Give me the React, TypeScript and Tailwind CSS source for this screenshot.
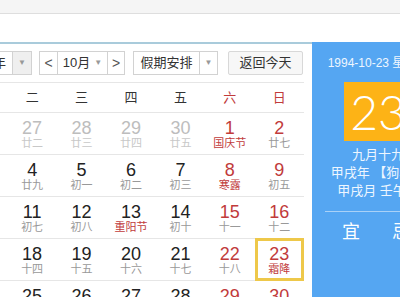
import React from 'react'

type Day = { n: number; lunar: string; other?: boolean; festival?: boolean; today?: boolean }

const rows: Day[][] = [
  [
    { n: 26, lunar: '廿一', other: true },
    { n: 27, lunar: '廿二', other: true },
    { n: 28, lunar: '廿三', other: true },
    { n: 29, lunar: '廿四', other: true },
    { n: 30, lunar: '廿五', other: true },
    { n: 1, lunar: '国庆节', festival: true },
    { n: 2, lunar: '廿七' },
  ],
  [
    { n: 3, lunar: '廿八' },
    { n: 4, lunar: '廿九' },
    { n: 5, lunar: '初一' },
    { n: 6, lunar: '初二' },
    { n: 7, lunar: '初三' },
    { n: 8, lunar: '寒露', festival: true },
    { n: 9, lunar: '初五' },
  ],
  [
    { n: 10, lunar: '初六' },
    { n: 11, lunar: '初七' },
    { n: 12, lunar: '初八' },
    { n: 13, lunar: '重阳节', festival: true },
    { n: 14, lunar: '初十' },
    { n: 15, lunar: '十一' },
    { n: 16, lunar: '十二' },
  ],
  [
    { n: 17, lunar: '十三' },
    { n: 18, lunar: '十四' },
    { n: 19, lunar: '十五' },
    { n: 20, lunar: '十六' },
    { n: 21, lunar: '十七' },
    { n: 22, lunar: '十八' },
    { n: 23, lunar: '霜降', festival: true, today: true },
  ],
  [
    { n: 24, lunar: '二十' },
    { n: 25, lunar: '廿一' },
    { n: 26, lunar: '廿二' },
    { n: 27, lunar: '廿三' },
    { n: 28, lunar: '廿四' },
    { n: 29, lunar: '廿五' },
    { n: 30, lunar: '廿六' },
  ],
]

const weekdays = ['一', '二', '三', '四', '五', '六', '日']

function Caret() {
  return <span className="text-[8px] text-[#999]">▼</span>
}

export default function App() {
  return (
    <div
      className="w-[400px] h-[297px] overflow-hidden bg-white"
      style={{ fontFamily: '"Liberation Sans", "Noto Sans CJK SC", sans-serif' }}
    >
      <div className="h-[14px] bg-[#f5f5f5] border-b border-[#dedede]" />
      <div className="h-[28px]" />

      <div className="flex">
        {/* calendar */}
        <div className="w-[312px] shrink-0 overflow-hidden border-t-2 border-[#a9cbdb]">
          <div className="ml-[-42px] w-[346px]">
            {/* toolbar */}
            <div className="h-[39px] flex items-center pl-[2px] border-b border-[#e6e6e6] text-[13px] text-[#333]">
              <div className="flex h-[24px] w-[72px] border border-[#d2d2d2] bg-white">
                <div className="flex-1 flex items-center justify-end pr-[6px]">1994年</div>
                <div className="w-[19px] flex items-center justify-center border-l border-[#d2d2d2] bg-[#efefef]">
                  <Caret />
                </div>
              </div>
              <div className="ml-[7px] flex h-[24px] w-[86px] border border-[#d2d2d2] bg-white">
                <div className="w-[18px] flex items-center justify-center border-r border-[#d2d2d2] text-[14px] text-[#555]">&lt;</div>
                <div className="flex-1 flex items-center justify-center gap-[4px]">
                  10月 <Caret />
                </div>
                <div className="w-[17px] flex items-center justify-center border-l border-[#d2d2d2] text-[14px] text-[#555]">&gt;</div>
              </div>
              <div className="ml-[8px] flex h-[24px] w-[85px] border border-[#d2d2d2] bg-white">
                <div className="flex-1 flex items-center justify-center">假期安排</div>
                <div className="w-[18px] flex items-center justify-center border-l border-[#d2d2d2]">
                  <Caret />
                </div>
              </div>
              <div className="ml-[10px] h-[24px] w-[75px] flex items-center justify-center border border-[#d8d8d8] rounded-[2px] bg-[#f7f7f7]">
                返回今天
              </div>
            </div>

            {/* weekday header */}
            <div className="grid grid-cols-7 h-[30px] border-b border-[#e6e6e6] text-[13px]">
              {weekdays.map((w, i) => (
                <div key={w} className={`flex items-center justify-center ${i >= 5 ? 'text-[#c13b3b]' : 'text-[#333]'}`}>
                  {w}
                </div>
              ))}
            </div>

            {/* days */}
            {rows.map((row, ri) => (
              <div key={ri} className="grid grid-cols-7 h-[42px] border-b border-[#e6e6e6]">
                {row.map((d, ci) => {
                  const weekend = ci >= 5
                  const numColor = d.other ? 'text-[#bdbdbd]' : weekend ? 'text-[#c13b3b]' : 'text-[#222]'
                  const lunarColor = d.other ? 'text-[#c8c8c8]' : d.festival ? 'text-[#c13b3b]' : 'text-[#999]'
                  return (
                    <div key={ci} className="relative flex flex-col items-center pt-[6px]">
                      {d.today && (
                        <span className="absolute -top-px -bottom-px left-0 right-0 border-[3px] border-[#eec84a]" />
                      )}
                      <span className={`text-[18px] leading-[18px] ${numColor}`}>{d.n}</span>
                      <span className={`text-[11px] leading-[12px] ${lunarColor}`}>{d.lunar}</span>
                    </div>
                  )
                })}
              </div>
            ))}
          </div>
        </div>

        {/* info panel */}
        <div className="w-[132px] shrink-0 h-[260px] bg-[#55a6f2] text-[#eef6ff] flex flex-col">
          <div className="pt-[14px] text-center text-[12px] leading-[14px]">1994-10-23 星期日</div>
          <div
            className="mt-[12px] mx-auto w-[68px] h-[59px] bg-[#fdb316] flex items-center justify-center text-white text-[48px] font-light leading-none"
            style={{ fontFamily: 'Lato, "Liberation Sans", sans-serif' }}
          >
            23
          </div>
          <div className="mt-[5px] text-center text-[13px] leading-[18px]">九月十九</div>
          <div className="text-center text-[13px] leading-[18px]">甲戌年 【狗年】</div>
          <div className="text-center text-[13px] leading-[18px]">甲戌月 壬午日</div>
          <div className="mt-[11px] mx-[13px] border-t border-[#a9d1f7]" />
          <div className="mt-[8px] flex pl-[30px] gap-[32px] text-[18px] leading-[24px] text-white">
            <span>宜</span>
            <span>忌</span>
          </div>
        </div>
      </div>
    </div>
  )
}
